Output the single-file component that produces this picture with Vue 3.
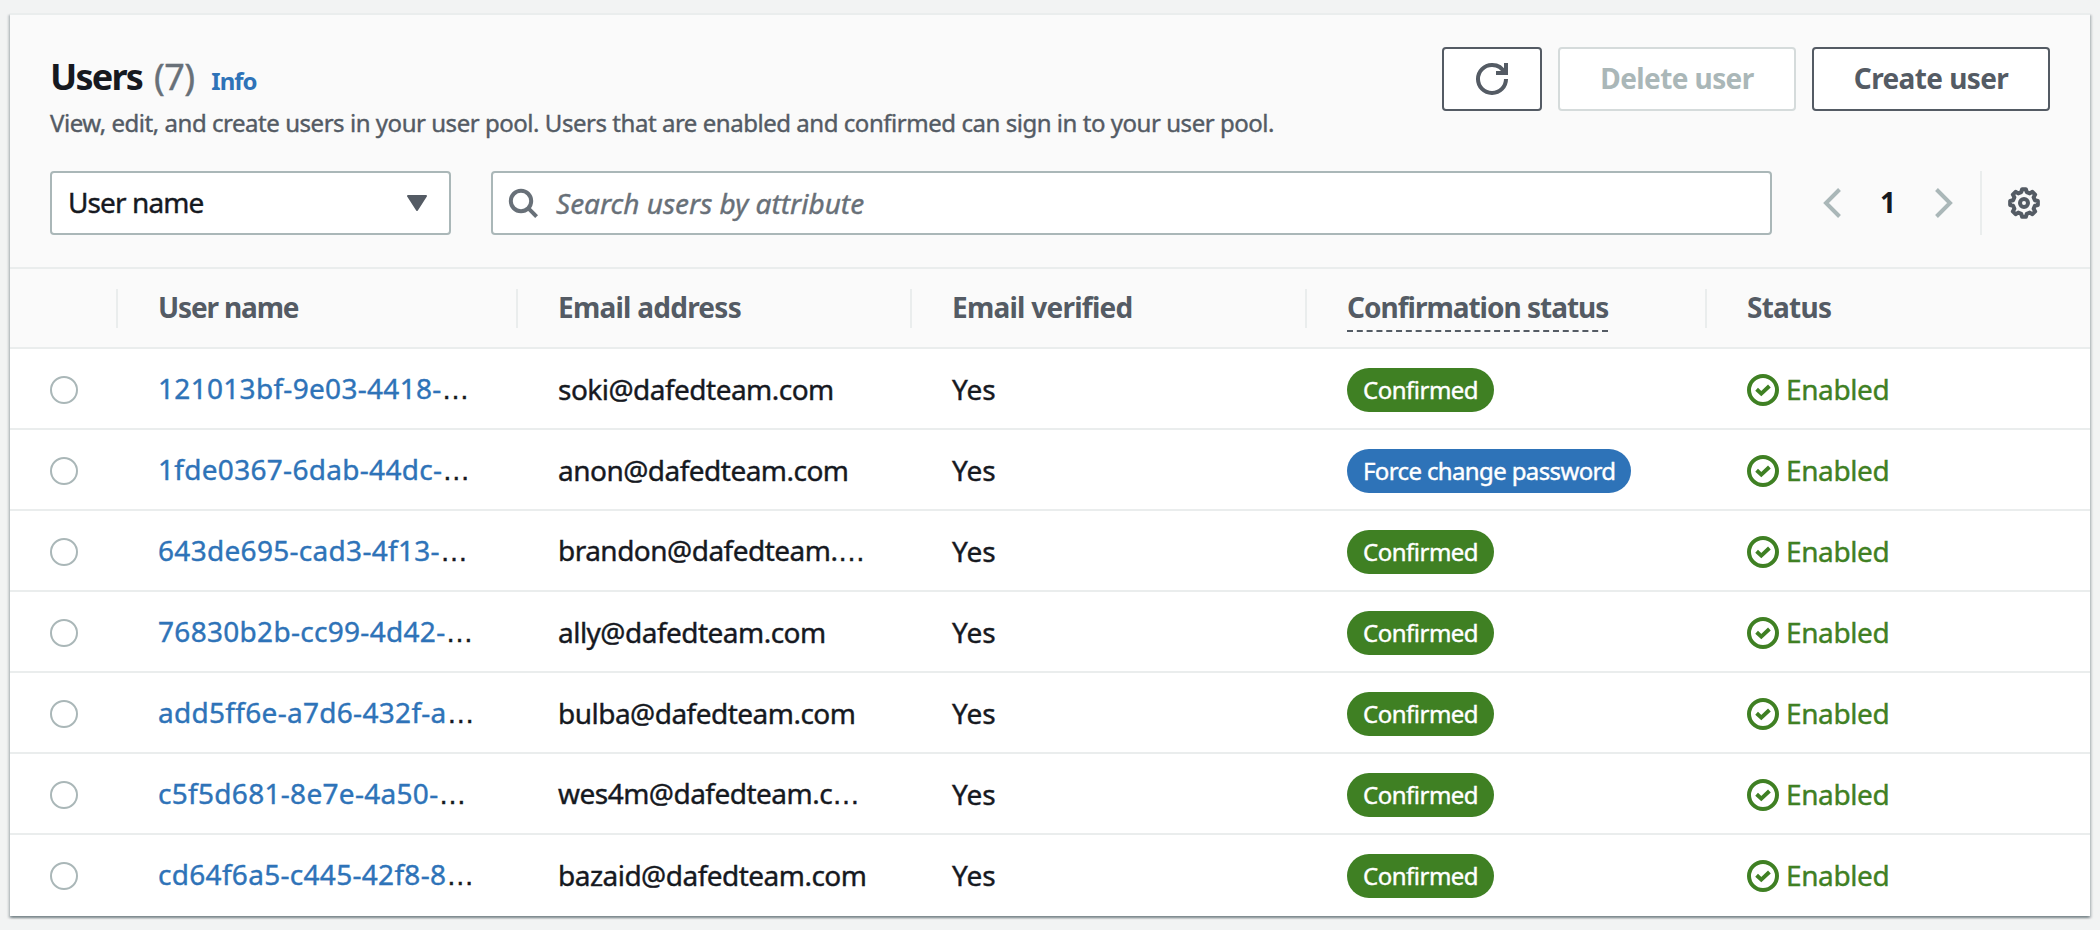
<script setup>
const columns = ['User name', 'Email address', 'Email verified', 'Confirmation status', 'Status']

const users = [
  { id: '121013bf-9e03-4418-', email: 'soki@dafedteam.com', status: 'Confirmed' },
  { id: '1fde0367-6dab-44dc-', email: 'anon@dafedteam.com', status: 'Force change password' },
  { id: '643de695-cad3-4f13-', email: 'brandon@dafedteam.', clipped: true, status: 'Confirmed' },
  { id: '76830b2b-cc99-4d42-', email: 'ally@dafedteam.com', status: 'Confirmed' },
  { id: 'add5ff6e-a7d6-432f-a', email: 'bulba@dafedteam.com', status: 'Confirmed' },
  { id: 'c5f5d681-8e7e-4a50-', email: 'wes4m@dafedteam.c', clipped: true, status: 'Confirmed' },
  { id: 'cd64f6a5-c445-42f8-8', email: 'bazaid@dafedteam.com', status: 'Confirmed' },
]

// Outline of an eight-toothed gear, centred in a 32 unit box
const gearPoints = []
for (let tooth = 0; tooth < 8; tooth++) {
  for (const [offset, radius] of [[-14, 11.2], [-8, 14], [8, 14], [14, 11.2]]) {
    const angle = ((tooth * 45 + offset - 90) * Math.PI) / 180
    gearPoints.push(`${(16 + radius * Math.cos(angle)).toFixed(2)},${(16 + radius * Math.sin(angle)).toFixed(2)}`)
  }
}
const gear = gearPoints.join(' ')
</script>

<template>
  <main class="page">
    <section class="panel">
      <header class="top">
        <div class="title-row">
          <div class="heading">
            <div class="title">
              <h1>Users</h1>
              <span class="count">(7)</span>
              <a class="info">Info</a>
            </div>
            <p class="description">View, edit, and create users in your user pool. Users that are enabled and confirmed can sign in to your user pool.</p>
          </div>
          <div class="actions">
            <button class="btn icon-btn" aria-label="Refresh">
              <svg class="icon" viewBox="0 0 16 16" stroke-width="2">
                <path d="M10 5h5V0" />
                <path d="M15 8a6.957 6.957 0 0 1-7 7 6.957 6.957 0 0 1-7-7 6.957 6.957 0 0 1 7-7 6.87 6.87 0 0 1 6.3 4" />
              </svg>
            </button>
            <button class="btn disabled">Delete user</button>
            <button class="btn">Create user</button>
          </div>
        </div>

        <div class="filters">
          <div class="field select">
            <span>User name</span>
            <svg class="caret" viewBox="0 0 20 16"><path d="M1 1h18L10 15z" /></svg>
          </div>
          <div class="field search">
            <svg class="icon" viewBox="0 0 32 32" stroke-width="4">
              <circle cx="14" cy="14" r="10.2" />
              <path d="M21.2 21.2 29.6 29.6" />
            </svg>
            <span class="placeholder">Search users by attribute</span>
          </div>
          <div class="pager">
            <svg class="chevron" viewBox="0 0 18 32"><path d="M16.5 2.5 3 16l13.5 13.5" /></svg>
            <span class="page-number">1</span>
            <svg class="chevron" viewBox="0 0 18 32"><path d="M1.5 2.5 15 16 1.5 29.5" /></svg>
          </div>
          <div class="settings">
            <svg class="icon" viewBox="0 0 32 32" stroke-width="4" stroke-linejoin="round">
              <polygon :points="gear" />
              <circle cx="16" cy="16" r="4" />
            </svg>
          </div>
        </div>
      </header>

      <div class="grid head">
        <div class="th"></div>
        <div v-for="(name, i) in columns" :key="name" class="th">
          <span :class="['label', 'label-' + i]">{{ name }}</span>
        </div>
      </div>

      <div v-for="user in users" :key="user.id" class="grid row">
        <div class="td pick"><span class="radio"></span></div>
        <div class="td"><span class="text id"><a>{{ user.id }}</a><span class="dots">…</span></span></div>
        <div class="td"><span class="text email">{{ user.email }}<span v-if="user.clipped" class="dots">…</span></span></div>
        <div class="td"><span class="text yes">Yes</span></div>
        <div class="td">
          <span :class="['badge', { blue: user.status !== 'Confirmed' }]">{{ user.status }}</span>
        </div>
        <div class="td enabled">
          <svg class="icon" viewBox="0 0 32 32" stroke-width="4">
            <circle cx="16" cy="16" r="14" />
            <path d="M9.6 15.2 14.3 19.6 22.4 12" />
          </svg>
          <span class="text">Enabled</span>
        </div>
      </div>
    </section>
  </main>
</template>

<style>
body {
  background: #f2f3f3;
}
</style>

<style scoped>
* {
  box-sizing: border-box;
}

.page {
  width: 2100px;
  height: 930px;
  padding: 13px 10px 14px;
  overflow: hidden;
  background: #f2f3f3;
  color: #16191f;
  font-family: "Noto Sans", "Open Sans", sans-serif;
  font-size: 28px;
  line-height: 40px;
  white-space: nowrap;
  -webkit-text-stroke: 0.4px currentColor;
}

.panel {
  height: 903px;
  border-top: 2px solid #eaeded;
  background: #fff;
  box-shadow:
    0 2px 2px 0 rgba(0, 28, 36, 0.3),
    2px 2px 2px 0 rgba(0, 28, 36, 0.15),
    -2px 2px 2px 0 rgba(0, 28, 36, 0.15);
}

.top {
  height: 254px;
  padding: 32px 40px 0;
  border-bottom: 2px solid #eaeded;
  background: #fafafa;
}

.title-row {
  display: flex;
  justify-content: space-between;
  height: 124px;
}

.title {
  display: flex;
  align-items: baseline;
  height: 44px;
  margin-top: 8px;
  line-height: 44px;
}

h1 {
  margin: 0;
  font-size: 36px;
  font-weight: 700;
  letter-spacing: -1.8px;
  -webkit-text-stroke: 0;
}

.count {
  margin-left: 12px;
  color: #687078;
  font-size: 36px;
  letter-spacing: -0.6px;
}

.info {
  margin-left: 17px;
  color: #2e73b8;
  font-size: 24px;
  font-weight: 700;
  letter-spacing: -1px;
  -webkit-text-stroke: 0;
}

.description {
  margin: 6px 0 0;
  color: #545b64;
  font-size: 24px;
  line-height: 36px;
  letter-spacing: -0.46px;
}

.actions {
  display: flex;
  gap: 16px;
}

.btn {
  display: flex;
  align-items: center;
  justify-content: center;
  width: 238px;
  height: 64px;
  padding: 0 0 2px;
  border: 2px solid #545b64;
  border-radius: 4px;
  background: #fff;
  color: #545b64;
  font: inherit;
  font-weight: 700;
  letter-spacing: -0.6px;
  -webkit-text-stroke: 0;
}

.icon-btn {
  width: 100px;
  padding: 0;
}

.disabled {
  border-color: #d5dbdb;
  color: #aab7b8;
}

.icon {
  flex: none;
  width: 32px;
  height: 32px;
  fill: none;
  stroke: currentColor;
}

.filters {
  display: flex;
  align-items: center;
}

.field {
  display: flex;
  align-items: center;
  height: 64px;
  border: 2px solid #aab7b8;
  border-radius: 4px;
  background: #fff;
}

.select {
  justify-content: space-between;
  width: 401px;
  margin-right: 40px;
  padding: 0 22px 2px 16px;
  letter-spacing: -0.9px;
}

.caret {
  width: 20px;
  height: 16px;
  margin-top: 2px;
  fill: #545b64;
  stroke: #545b64;
  stroke-width: 2;
  stroke-linejoin: round;
}

.search {
  width: 1281px;
  padding-left: 14px;
  color: #687078;
}

.placeholder {
  margin-left: 17px;
  padding-bottom: 1px;
  font-style: italic;
}

.pager {
  display: flex;
  align-items: center;
  margin-left: 51px;
}

.chevron {
  width: 18px;
  height: 32px;
  fill: none;
  stroke: #aab7b8;
  stroke-width: 4;
}

.page-number {
  width: 94px;
  padding-bottom: 2px;
  font-weight: 700;
  text-align: center;
  -webkit-text-stroke: 0;
}

.settings {
  display: flex;
  align-items: center;
  height: 64px;
  margin-left: 27px;
  padding-left: 26px;
  border-left: 2px solid #eaeded;
  color: #545b64;
}

.grid {
  display: grid;
  grid-template-columns: 108px 400px 394px 395px 400px 1fr;
}

.head {
  height: 80px;
  padding-top: 20px;
  border-bottom: 2px solid #eaeded;
  background: #fafafa;
  color: #545b64;
  font-weight: 700;
  -webkit-text-stroke: 0;
}

.th {
  height: 39px;
  padding-left: 40px;
  border-right: 2px solid #eaeded;
  line-height: 37px;
  letter-spacing: -0.75px;
}

.th:last-child {
  border-right: 0;
}

.label {
  display: inline-block;
}

.label-0 {
  letter-spacing: -1.15px;
}

.label-3 {
  height: 42px;
  border-bottom: 2px dashed #545b64;
  line-height: 34px;
  letter-spacing: -1px;
}

.row {
  height: 81px;
  border-bottom: 2px solid #eaeded;
}

.row:last-child {
  border-bottom: 0;
}

.td {
  display: flex;
  align-items: center;
  height: 81px;
  padding-left: 40px;
}

.radio {
  width: 28px;
  height: 28px;
  border: 2px solid #aab7b8;
  border-radius: 50%;
  background: #fff;
}

.text {
  padding-bottom: 2px;
}

.id {
  letter-spacing: 0.3px;
}

.id a {
  color: #2e73b8;
}

.dots {
  font-family: "Liberation Sans", sans-serif;
  letter-spacing: 0;
}

.email {
  letter-spacing: -0.52px;
}

.badge {
  height: 44px;
  padding: 0 16px;
  border-radius: 22px;
  background: #3f8023;
  color: #fff;
  font-size: 24px;
  line-height: 44px;
  letter-spacing: -0.5px;
}

.badge.blue {
  background: #2e73b8;
  letter-spacing: -0.63px;
}

.enabled {
  color: #3f8023;
  letter-spacing: -0.4px;
}

.enabled .text {
  margin-left: 7px;
}
</style>
